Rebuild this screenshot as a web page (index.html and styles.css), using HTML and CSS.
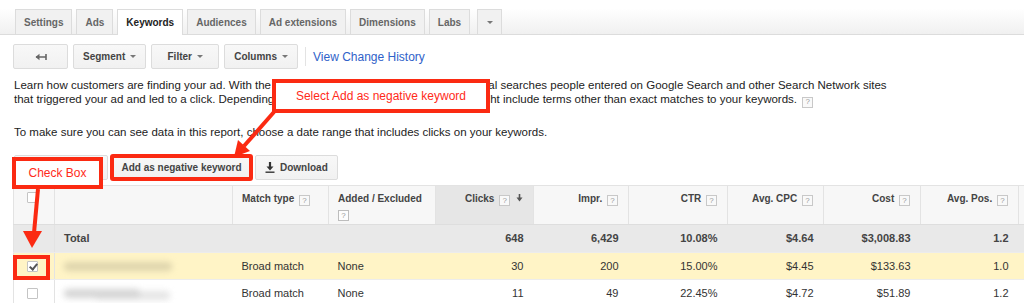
FILE: index.html
```html
<!DOCTYPE html>
<html lang="en">

<head>
  <meta charset="UTF-8" />
  <title>Keywords - Search terms</title>
  <link rel="stylesheet" href="styles.css">
</head>

<body>
  <div class="page">
    <div class="tabs">
      <span class="tab">Settings</span>
      <span class="tab">Ads</span>
      <span class="tab active">Keywords</span>
      <span class="tab">Audiences</span>
      <span class="tab">Ad extensions</span>
      <span class="tab">Dimensions</span>
      <span class="tab">Labs</span>
      <span class="tab tab-more"><span class="caret"></span></span>
    </div>

    <div class="toolbar">
      <button class="btn btn-back">
        <svg width="12" height="8" viewBox="0 0 12 8">
          <path d="M1 4h10M11 1v6" stroke="#666" stroke-width="1.6" fill="none" />
          <path d="M0.5 4 4.5 0.8v6.4z" fill="#666" />
        </svg>
      </button>
      <button class="btn">Segment <span class="caret"></span></button>
      <button class="btn">Filter <span class="caret"></span></button>
      <button class="btn">Columns <span class="caret"></span></button>
      <span class="divider"></span>
      <a class="link" href="#">View Change History</a>
    </div>

    <p class="intro">Learn how customers are finding your ad. With the Search terms report, you can see the actual searches people entered on Google Search and other Search Network sites<br>
      that triggered your ad and led to a click. Depending on your keyword match types, this list might include terms other than exact matches to your keywords. <span class="help">?</span></p>
    <p class="intro">To make sure you can see data in this report, choose a date range that includes clicks on your keywords.</p>

    <div class="actions">
      <!-- covered by the "Check Box" callout -->
      <button class="btn btn-edit"></button>
      <button class="btn marked">Add as negative keyword</button>
      <button class="btn">
        <svg width="10" height="11" viewBox="0 0 10 11">
          <path d="M5 0v6" stroke="#333" stroke-width="2.2" />
          <path d="M1.5 4.5h7L5 8.5z" fill="#333" />
          <path d="M0.5 10.2h9" stroke="#333" stroke-width="1.4" />
        </svg>
        Download
      </button>
    </div>

    <table class="grid">
      <colgroup>
        <col style="width:41px"><col style="width:178px"><col style="width:96px"><col style="width:107px">
        <col style="width:98px"><col style="width:95px"><col style="width:99px"><col style="width:96px">
        <col style="width:97px"><col style="width:98px"><col style="width:40px">
      </colgroup>
      <thead>
        <tr>
          <th class="cb-cell"><span class="check"></span></th>
          <th></th>
          <th>Match type <span class="help">?</span></th>
          <th>
            <div class="th-label">Added / Excluded</div>
            <div class="th-help"><span class="help">?</span></div>
          </th>
          <th class="num sorted">Clicks <span class="help">?</span>
            <svg class="sort" width="7" height="8" viewBox="0 0 7 8"><path d="M3.5 0v4" stroke="#555" stroke-width="1.6" /><path d="M0.5 3.5h6L3.5 7.5z" fill="#555" /></svg>
          </th>
          <th class="num">Impr. <span class="help">?</span></th>
          <th class="num">CTR <span class="help">?</span></th>
          <th class="num">Avg. CPC <span class="help">?</span></th>
          <th class="num">Cost <span class="help">?</span></th>
          <th class="num">Avg. Pos. <span class="help">?</span></th>
          <th></th>
        </tr>
      </thead>
      <tbody>
        <tr class="total">
          <td class="cb-cell"></td>
          <td>Total</td>
          <td></td>
          <td></td>
          <td class="num">648</td>
          <td class="num">6,429</td>
          <td class="num">10.08%</td>
          <td class="num">$4.64</td>
          <td class="num">$3,008.83</td>
          <td class="num">1.2</td>
          <td></td>
        </tr>
        <tr class="selected">
          <td class="cb-cell"><span class="check checked"></span></td>
          <td><span class="blurred wide"></span></td>
          <td>Broad match</td>
          <td>None</td>
          <td class="num">30</td>
          <td class="num">200</td>
          <td class="num">15.00%</td>
          <td class="num">$4.45</td>
          <td class="num">$133.63</td>
          <td class="num">1.0</td>
          <td></td>
        </tr>
        <tr>
          <td class="cb-cell"><span class="check"></span></td>
          <td><span class="blurred"></span></td>
          <td>Broad match</td>
          <td>None</td>
          <td class="num">11</td>
          <td class="num">49</td>
          <td class="num">22.45%</td>
          <td class="num">$4.72</td>
          <td class="num">$51.89</td>
          <td class="num">1.2</td>
          <td></td>
        </tr>
      </tbody>
    </table>

    <!-- annotations drawn over the screenshot -->
    <div class="callout callout-negative">Select Add as negative keyword</div>
    <div class="callout callout-check">Check Box</div>
    <div class="ring ring-check"></div>
    <svg class="arrows" width="1024" height="303" viewBox="0 0 1024 303">
      <path d="M274 112 244 146" stroke="#fb2a12" stroke-width="4" />
      <path d="M234 157 250 151 238 140z" fill="#fb2a12" />
      <path d="M38 189 34 233" stroke="#fb2a12" stroke-width="4" />
      <path d="M32 248 23 231 42 231z" fill="#fb2a12" />
    </svg>
  </div>
</body>

</html>
```

FILE: styles.css
```css
* {
  box-sizing: border-box;
}

body {
  margin: 0;
  font-family: "Liberation Sans", Arial, Helvetica, sans-serif;
  color: #222;
  background: #fff;
}

.page {
  position: relative;
  width: 1024px;
  height: 303px;
  overflow: hidden;
}

/* tab strip */
.tabs {
  display: flex;
  align-items: flex-end;
  height: 35px;
  padding-left: 15px;
  background: linear-gradient(#fff 25%, #f0f0f0);
  border-bottom: 1px solid #dcdcdc;
}

.tab {
  display: flex;
  align-items: center;
  height: 25px;
  padding: 0 8px;
  margin-right: 4px;
  border: 1px solid #dcdcdc;
  border-bottom: 0;
  background: #f1f1f1;
  font-size: 10px;
  font-weight: bold;
  color: #666;
}

.tab.active {
  height: 26px;
  margin-bottom: -1px;
  background: #fff;
  color: #222;
  position: relative;
}

.tab-more {
  width: 25px;
  margin-left: 3px;
  justify-content: center;
  padding: 0;
}

.caret {
  display: inline-block;
  border-left: 3px solid transparent;
  border-right: 3px solid transparent;
  border-top: 3px solid #777;
}

/* toolbar */
.toolbar {
  display: flex;
  align-items: center;
  gap: 5px;
  padding: 9px 13px 0;
}

.btn {
  display: inline-flex;
  align-items: center;
  justify-content: center;
  gap: 5px;
  height: 25px;
  min-width: 68px;
  padding: 0 9px;
  border: 1px solid #dcdcdc;
  border-radius: 2px;
  background: linear-gradient(#f8f8f8, #f1f1f1);
  font-family: inherit;
  font-size: 10px;
  font-weight: bold;
  color: #444;
  white-space: nowrap;
}

.btn-back {
  width: 55px;
  min-width: 0;
}

.divider {
  width: 1px;
  height: 19px;
  margin-left: 2px;
  background: #e3e3e3;
}

.link {
  margin-left: 2px;
  font-size: 12px;
  color: #2f62c9;
  text-decoration: none;
}

/* description */
.intro {
  margin: 9px 14px 0;
  font-size: 11.5px;
  line-height: 14px;
  color: #222;
}

.intro + .intro {
  margin-top: 17px;
}

.help {
  display: inline-flex;
  align-items: center;
  justify-content: center;
  width: 11px;
  height: 11px;
  margin-left: 2px;
  border: 1px solid #c8c8c8;
  background: #f9f9f9;
  font-size: 8px;
  font-weight: normal;
  color: #999;
  vertical-align: -1px;
}

.th-label {
  line-height: 12px;
}

.th-help {
  margin-top: 3px;
  height: 12px;
  line-height: 11px;
}

.th-help .help {
  margin-left: 0;
  border-color: #bdbdbd;
  background: #fdfdfd;
}

/* actions */
.actions {
  display: flex;
  gap: 3px;
  padding: 16px 13px 0 14px;
}

.btn-edit {
  width: 94px;
}

.marked {
  width: 141px;
  padding: 0 6px;
  outline: 4px solid #fb2a12;
  outline-offset: -3px;
}

/* grid */
.grid {
  table-layout: fixed;
  border-collapse: collapse;
  width: 1045px;
  margin: 5px 0 0 13px;
  font-size: 11px;
  color: #333;
}

.grid th {
  height: 39px;
  padding: 7px 9px 0;
  vertical-align: top;
  text-align: left;
  font-size: 10px;
  font-weight: bold;
  color: #444;
  background: #f7f7f7;
  border: 1px solid #e3e3e3;
  border-bottom-color: #dedede;
  white-space: nowrap;
}

.grid th.sorted {
  background: #e6e6e6;
}

.grid td {
  height: 27px;
  padding: 0 9px;
  border-bottom: 1px solid #ececec;
  white-space: nowrap;
}

.grid .num {
  text-align: right;
  padding-right: 10px;
}

.grid .cb-cell {
  padding: 0 0 0 13px;
  border-right: 1px solid #e3e3e3;
  border-left: 1px solid #e3e3e3;
  text-align: left;
}

.grid th.cb-cell {
  padding-top: 6px;
}

.sort {
  margin-left: 3px;
}

.total td {
  height: 28px;
  background: #e9e9e9;
  font-weight: bold;
  color: #444;
}

.selected td {
  background: #fff4c6;
}

.check {
  display: inline-block;
  width: 11px;
  height: 11px;
  border: 1px solid #c4c4c4;
  border-radius: 1px;
  background: #fff;
  vertical-align: middle;
  position: relative;
}

.checked::after {
  content: "";
  position: absolute;
  left: 3px;
  top: 0;
  width: 3px;
  height: 6px;
  border-right: 2px solid #555;
  border-bottom: 2px solid #555;
  transform: rotate(40deg);
}

.blurred {
  display: inline-block;
  width: 76px;
  height: 9px;
  border-radius: 4px;
  background: #b9b9b9;
  filter: blur(3px);
  opacity: 0.6;
  vertical-align: middle;
  box-shadow: 30px 2px 0 #d4d4d4;
}

.blurred.wide {
  width: 108px;
  background: #c9c09c;
  box-shadow: none;
}

/* annotations */
.callout {
  position: absolute;
  display: flex;
  align-items: center;
  justify-content: center;
  border: 4px solid #fb2a12;
  background: #fff;
  font-size: 12px;
  color: #ff2a1a;
}

.callout-negative {
  left: 272px;
  top: 79px;
  width: 218px;
  height: 34px;
}

.callout-check {
  left: 12px;
  top: 157px;
  width: 91px;
  height: 32px;
}

.ring {
  position: absolute;
  border: 4px solid #fb2a12;
}

.ring-check {
  left: 13px;
  top: 255px;
  width: 37px;
  height: 25px;
}

.arrows {
  position: absolute;
  left: 0;
  top: 0;
  pointer-events: none;
}
```
